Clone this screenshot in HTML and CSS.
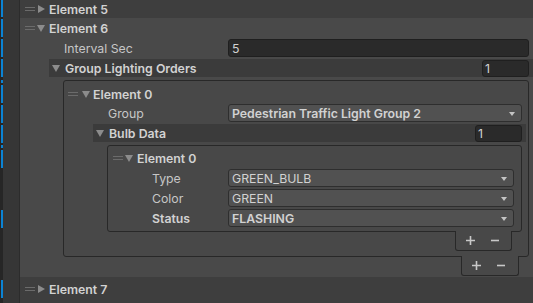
FILE: index.html
```html
<!DOCTYPE html>
<html lang="en">
<head>
    <meta charset="UTF-8">
    <title>Inspector - Traffic Light Sequence</title>
    <link rel="stylesheet" href="styles.css">
</head>
<body>

    <!-- Left gutter with prefab override marks -->
    <div class="gutter">
        <div class="marks">
            <span class="mark first"></span>
            <span class="mark"></span>
            <span class="mark"></span>
            <span class="mark"></span>
            <span class="mark short gap-3"></span>
            <span class="mark"></span>
            <span class="mark"></span>
            <span class="mark"></span>
            <span class="mark short"></span>
            <span class="mark"></span>
            <span class="mark gap-42"></span>
            <span class="mark gap-52"></span>
        </div>
    </div>

    <div class="inspector">
        <!-- Element 5 (collapsed) -->
        <div class="element collapsed">
            <div class="element-row">
                <span class="handle"></span>
                <span class="arrow-right"></span>
                <span class="element-name">Element 5</span>
            </div>
        </div>

        <!-- Element 6 (expanded) -->
        <div class="element open">
            <div class="element-row header">
                <span class="handle"></span>
                <span class="arrow-down"></span>
                <span class="element-name">Element 6</span>
            </div>

            <div class="prop level-1 interval">
                <span class="label">Interval Sec</span>
                <div class="text-field">5</div>
            </div>

            <div class="foldout level-1">
                <span class="arrow-down"></span>
                <span class="foldout-name">Group Lighting Orders</span>
                <div class="text-field size">1</div>
            </div>

            <div class="list outer">
                <div class="list-box">
                    <div class="element-row">
                        <span class="handle"></span>
                        <span class="arrow-down"></span>
                        <span class="element-name">Element 0</span>
                    </div>

                    <div class="prop level-2">
                        <span class="label">Group</span>
                        <div class="dropdown bold">Pedestrian Traffic Light Group 2</div>
                    </div>

                    <div class="foldout level-2">
                        <span class="arrow-down"></span>
                        <span class="foldout-name">Bulb Data</span>
                        <div class="text-field size">1</div>
                    </div>

                    <div class="list inner">
                        <div class="list-box">
                            <div class="element-row">
                                <span class="handle"></span>
                                <span class="arrow-down"></span>
                                <span class="element-name">Element 0</span>
                            </div>
                            <div class="prop level-3">
                                <span class="label">Type</span>
                                <div class="dropdown">GREEN_BULB</div>
                            </div>
                            <div class="prop level-3">
                                <span class="label">Color</span>
                                <div class="dropdown">GREEN</div>
                            </div>
                            <div class="prop level-3">
                                <span class="label bold">Status</span>
                                <div class="dropdown bold">FLASHING</div>
                            </div>
                        </div>
                        <div class="list-footer">
                            <svg class="plus" width="9" height="9" viewBox="0 0 9 9"><path d="M0 4.5H9M4.5 0V9"/></svg>
                            <svg class="minus" width="8" height="9" viewBox="0 0 8 9"><path d="M0 4.5H8"/></svg>
                        </div>
                    </div>
                </div>
                <div class="list-footer">
                    <svg class="plus" width="9" height="9" viewBox="0 0 9 9"><path d="M0 4.5H9M4.5 0V9"/></svg>
                    <svg class="minus" width="8" height="9" viewBox="0 0 8 9"><path d="M0 4.5H8"/></svg>
                </div>
            </div>
        </div>

        <!-- Element 7 (collapsed) -->
        <div class="element collapsed last">
            <div class="element-row">
                <span class="handle"></span>
                <span class="arrow-right"></span>
                <span class="element-name">Element 7</span>
            </div>
        </div>
    </div>

</body>
</html>
```

FILE: styles.css
```css
/* Global */
* {
    box-sizing: border-box;
}

body {
    margin: 0;
    width: 533px;
    height: 303px;
    overflow: hidden;
    display: flex;
    background-color: #494949;
    font-family: Inter, "Noto Sans", sans-serif;
    font-size: 12.3px;
    color: #c6c6c6;
}

.bold {
    font-weight: 600;
    color: #d2d2d2;
}

/* Gutter */
.gutter {
    width: 20px;
    flex: none;
    display: flex;
    background-color: #363636;
    border-right: 1px solid #2c2c2c;
}

.marks {
    width: 3px;
    display: flex;
    flex-direction: column;
    background-color: #262626;
}

.mark {
    flex: none;
    width: 2px;
    height: 18px;
    margin-top: 2px;
    margin-left: 1px;
    background-color: #0b83d4;
}

.mark.first {
    height: 17px;
    margin-top: 0;
}

.mark.short {
    height: 3px;
}

.mark.gap-3 {
    margin-top: 3px;
}

.mark.gap-42 {
    margin-top: 42px;
}

.mark.gap-52 {
    margin-top: 52px;
}

/* Inspector */
.inspector {
    flex: 1;
    min-width: 0;
    display: flex;
    flex-direction: column;
}

.element.collapsed {
    background-color: #3e3e3e;
}

.element.open {
    background-color: #494949;
    padding-bottom: 1px;
}

.element.last {
    flex: 1;
    padding-top: 2px;
}

.element-row {
    display: flex;
    align-items: center;
    height: 18px;
}

.element-row.header {
    height: 20px;
}

.element.last .element-row {
    height: 20px;
}

.element > .element-row {
    padding-left: 5px;
}

.element > .element-row .arrow-right {
    margin-left: 3px;
}

.element > .element-row .arrow-down {
    margin-left: 2px;
}

.element-name {
    margin-left: 4px;
    font-weight: 600;
    color: #d2d2d2;
}

/* Drag handle and foldout arrows */
.handle {
    flex: none;
    width: 10px;
    height: 4px;
    border-top: 1px solid #6b6b6b;
    border-bottom: 1px solid #6b6b6b;
}

.arrow-right {
    flex: none;
    width: 0;
    height: 0;
    border-left: 7px solid #8c8c8c;
    border-top: 4px solid transparent;
    border-bottom: 4px solid transparent;
}

.arrow-down {
    flex: none;
    width: 0;
    height: 0;
    border-top: 7px solid #8c8c8c;
    border-left: 4px solid transparent;
    border-right: 4px solid transparent;
}

/* Property rows */
.prop {
    display: flex;
    align-items: center;
    height: 18px;
    margin-top: 2px;
}

.prop.interval {
    margin-top: 1px;
    padding-left: 44px;
    padding-right: 4px;
}

.prop.interval .label {
    width: 164px;
}

.label {
    flex: none;
}

.text-field {
    flex: 1;
    height: 18px;
    display: flex;
    align-items: center;
    padding-left: 3px;
    background-color: #2a2a2a;
    border: 1px solid #1f1f1f;
    border-radius: 3px;
    color: #d2d2d2;
}

.text-field.size {
    flex: none;
    width: 47px;
    height: 17px;
    padding-left: 2px;
}

.dropdown {
    flex: 1;
    height: 18px;
    display: flex;
    align-items: center;
    padding-left: 3px;
    background-color: #515151;
    border: 1px solid #2e2e2e;
    border-radius: 3px;
    color: #d2d2d2;
    position: relative;
}

.dropdown::after {
    content: "";
    position: absolute;
    right: 6px;
    top: 7px;
    border-top: 4px solid #c4c4c4;
    border-left: 3.5px solid transparent;
    border-right: 3.5px solid transparent;
}

/* Foldout header bands */
.foldout {
    display: flex;
    align-items: center;
    height: 18px;
    margin-top: 2px;
    padding-left: 3px;
    background-color: #3b3b3b;
}

.foldout .foldout-name {
    flex: 1;
    margin-left: 5px;
    font-weight: 600;
    color: #d2d2d2;
}

.foldout.level-1 {
    margin-left: 29px;
    padding-right: 4px;
}

.foldout.level-2 {
    margin-left: 29px;
    margin-right: 2px;
    padding-right: 4px;
}

/* Reorderable lists */
.list {
    display: flex;
    flex-direction: column;
    margin-top: 3px;
}

.list.outer {
    margin-left: 43px;
    margin-right: 4px;
}

.list.inner {
    margin-left: 43px;
    margin-right: 6px;
}

.list-box {
    background-color: #484848;
    border: 1px solid #282828;
    border-radius: 3px;
}

.list.outer > .list-box {
    padding-top: 4px;
    padding-bottom: 5px;
}

.list.inner > .list-box {
    padding-top: 3px;
    padding-bottom: 4px;
}

.list-box > .element-row {
    padding-left: 4px;
}

.list-box > .element-row .arrow-down {
    margin-left: 4px;
}

.list-box > .element-row .element-name {
    margin-left: 3px;
}

.list.inner .list-box > .element-row {
    padding-left: 5px;
}

.list.inner .list-box > .element-row .arrow-down {
    margin-left: 2px;
}

.list.inner .list-box > .element-row .element-name {
    margin-left: 4px;
}

.prop.level-2 {
    margin-top: 1px;
    padding-left: 44px;
    padding-right: 6px;
}

.prop.level-2 .label {
    width: 120px;
}

.prop.level-3 {
    padding-left: 44px;
    padding-right: 7px;
}

.prop.level-3 .label {
    width: 76px;
}

.list-footer {
    align-self: flex-end;
    display: flex;
    align-items: center;
    gap: 16px;
    height: 20px;
    margin-top: -1px;
    margin-right: 10px;
    padding-left: 10px;
    background-color: #484848;
    border: 1px solid #282828;
    border-top: none;
    border-radius: 0 0 3px 3px;
}

.list.inner > .list-footer {
    width: 57px;
}

.list.outer > .list-footer {
    width: 58px;
}

.list-footer svg {
    stroke: #c8c8c8;
    stroke-width: 1.6;
    fill: none;
}
```
